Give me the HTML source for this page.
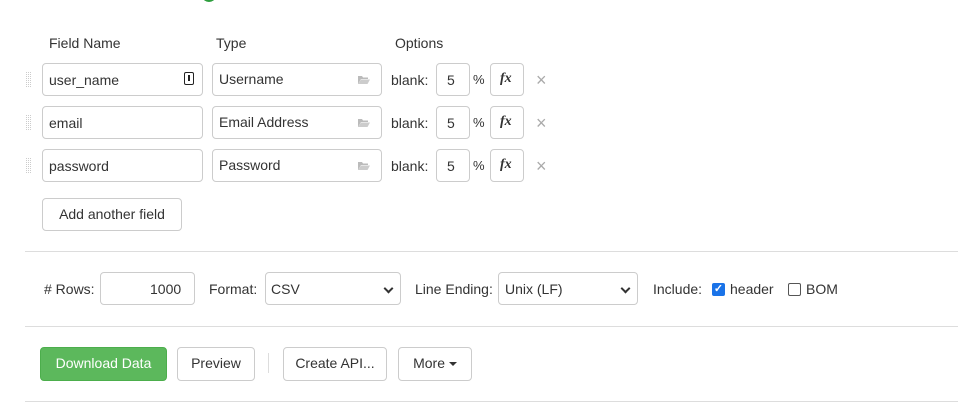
<!DOCTYPE html>
<html><head><meta charset="utf-8"><style>
*{box-sizing:border-box}
body{margin:0;width:958px;height:413px;background:#fff;font-family:"Liberation Sans",sans-serif;font-size:14px;color:#333;position:relative;overflow:hidden}
.a{position:absolute}
.box{position:absolute;border:1px solid #ccc;border-radius:4px;background:#fff}
.t{position:absolute;white-space:nowrap}
.hr{position:absolute;left:25px;right:0;height:1px;background:#ddd}
.btn{position:absolute;border:1px solid #ccc;border-radius:4px;background:#fff;text-align:center;line-height:31px;font-size:14px;color:#333}
.grip{position:absolute;width:7px;height:17px;background-image:linear-gradient(90deg,#fff 1px,transparent 1px),linear-gradient(#fff 1px,transparent 1px);background-size:2px 2px;background-color:#ccc}
.fx{font-family:"Liberation Serif",serif;font-style:italic;font-weight:bold;font-size:14px}
.sel:after{content:"";position:absolute;right:8px;top:12px;width:5px;height:5px;border-right:2px solid #333;border-bottom:2px solid #333;transform:rotate(45deg)}
.x{position:absolute;color:#aaa;font-size:18px;line-height:18px}
</style></head><body>
<div class="a" style="left:203px;top:-7px;width:12px;height:9px;border-radius:50%;background:#2e9e3e"></div>

<div class="t" style="left:49px;top:35px">Field Name</div>
<div class="t" style="left:216px;top:35px">Type</div>
<div class="t" style="left:395px;top:35px">Options</div>

<svg width="0" height="0" style="position:absolute"><defs><g id="fold"><path d="M0 1h4l1 1.5h5v1.5H3L0 9z" fill="#bbb"/><path d="M3 4.5h9L9.5 9H0z" fill="#ccc"/></g></defs></svg>

<div class="grip" style="left:25px;top:71px"></div>
<div class="box" style="left:42px;top:63px;width:161px;height:33px"></div>
<div class="t" style="left:49px;top:72px">user_name</div>
<div class="a" style="left:184px;top:72px;width:10px;height:13px;border:1.5px solid #222;border-radius:2px;background:#fff"><div class="a" style="left:2.5px;top:2px;width:2.5px;height:6px;background:#222"></div></div>
<div class="box" style="left:212px;top:63px;width:170px;height:33px"></div>
<div class="t" style="left:219px;top:71px">Username</div>
<svg class="a" style="left:358px;top:75px" width="12" height="9"><use href="#fold"/></svg>
<div class="t" style="left:391px;top:72px">blank:</div>
<div class="box" style="left:436px;top:63px;width:34px;height:33px"></div>
<div class="t" style="left:447px;top:72px">5</div>
<div class="t" style="left:473px;top:72px;font-size:13px">%</div>
<div class="box" style="left:490px;top:63px;width:34px;height:33px"></div>
<div class="t fx" style="left:500px;top:71px">fx</div>
<div class="x" style="left:536px;top:71px">×</div>

<div class="grip" style="left:25px;top:114px"></div>
<div class="box" style="left:42px;top:106px;width:161px;height:33px"></div>
<div class="t" style="left:49px;top:115px">email</div>
<div class="box" style="left:212px;top:106px;width:170px;height:33px"></div>
<div class="t" style="left:219px;top:114px">Email Address</div>
<svg class="a" style="left:358px;top:118px" width="12" height="9"><use href="#fold"/></svg>
<div class="t" style="left:391px;top:115px">blank:</div>
<div class="box" style="left:436px;top:106px;width:34px;height:33px"></div>
<div class="t" style="left:447px;top:115px">5</div>
<div class="t" style="left:473px;top:115px;font-size:13px">%</div>
<div class="box" style="left:490px;top:106px;width:34px;height:33px"></div>
<div class="t fx" style="left:500px;top:114px">fx</div>
<div class="x" style="left:536px;top:114px">×</div>

<div class="grip" style="left:25px;top:157px"></div>
<div class="box" style="left:42px;top:149px;width:161px;height:33px"></div>
<div class="t" style="left:49px;top:158px">password</div>
<div class="box" style="left:212px;top:149px;width:170px;height:33px"></div>
<div class="t" style="left:219px;top:157px">Password</div>
<svg class="a" style="left:358px;top:161px" width="12" height="9"><use href="#fold"/></svg>
<div class="t" style="left:391px;top:158px">blank:</div>
<div class="box" style="left:436px;top:149px;width:34px;height:33px"></div>
<div class="t" style="left:447px;top:158px">5</div>
<div class="t" style="left:473px;top:158px;font-size:13px">%</div>
<div class="box" style="left:490px;top:149px;width:34px;height:33px"></div>
<div class="t fx" style="left:500px;top:157px">fx</div>
<div class="x" style="left:536px;top:157px">×</div>

<div class="btn" style="left:42px;top:198px;width:140px;height:33px">Add another field</div>

<div class="hr" style="top:251px"></div>

<div class="t" style="left:44px;top:281px">#&nbsp;Rows:</div>
<div class="box" style="left:100px;top:272px;width:95px;height:33px"></div>
<div class="t" style="left:150px;top:281px">1000</div>
<div class="t" style="left:209px;top:281px">Format:</div>
<div class="box sel" style="left:265px;top:272px;width:136px;height:33px"></div>
<div class="t" style="left:271px;top:281px">CSV</div>
<div class="t" style="left:415px;top:281px">Line Ending:</div>
<div class="box sel" style="left:498px;top:272px;width:140px;height:33px"></div>
<div class="t" style="left:505px;top:281px">Unix (LF)</div>
<div class="t" style="left:653px;top:281px">Include:</div>
<div class="a" style="left:712px;top:283px;width:13px;height:13px;background:#1a73e8;border-radius:2px;color:#fff;font-size:11px;line-height:13px;text-align:center;font-weight:bold">✓</div>
<div class="t" style="left:730px;top:281px">header</div>
<div class="a" style="left:788px;top:283px;width:13px;height:13px;border:1px solid #555;border-radius:2px"></div>
<div class="t" style="left:806px;top:281px">BOM</div>

<div class="hr" style="top:326px"></div>

<div class="btn" style="left:40px;top:347px;width:127px;height:34px;background:#5cb85c;border-color:#4cae4c;color:#fff">Download Data</div>
<div class="btn" style="left:177px;top:347px;width:78px;height:34px">Preview</div>
<div class="a" style="left:268px;top:353px;width:1px;height:20px;background:#ddd"></div>
<div class="btn" style="left:283px;top:347px;width:104px;height:34px">Create API...</div>
<div class="btn" style="left:398px;top:347px;width:74px;height:34px">More <span style="display:inline-block;border-left:4px solid transparent;border-right:4px solid transparent;border-top:4px solid #333;vertical-align:middle"></span></div>

<div class="hr" style="top:401px"></div>
</body></html>
